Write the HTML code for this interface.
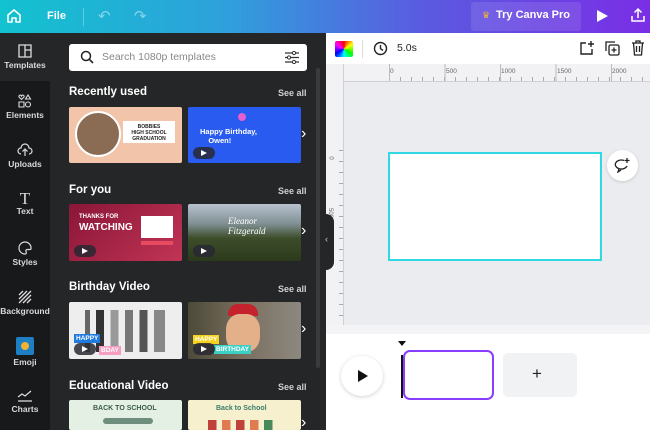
<!DOCTYPE html><html><head><style>
*{margin:0;padding:0;box-sizing:border-box}
body{width:650px;height:430px;overflow:hidden;font-family:"Liberation Sans",sans-serif;background:#fff;position:relative}
.a{position:absolute}
.top{left:0;top:0;width:650px;height:33px;background:linear-gradient(90deg,#12c2cf 0%,#2fa0dc 35%,#5a5be0 65%,#7a2ee6 100%)}
.side{left:0;top:33px;width:50px;height:397px;background:#18191b}
.panel{left:50px;top:33px;width:276px;height:397px;background:#252627}
.si{position:absolute;left:0;width:50px;text-align:center;color:#d9d9da;font-size:8.5px;font-weight:bold}
.h{position:absolute;left:69px;color:#fff;font-size:11.5px;font-weight:bold}
.sa{position:absolute;left:278px;color:#d0d0d0;font-size:9px;font-weight:bold}
.th{position:absolute;width:113px;border-radius:2px;overflow:hidden}
.chev{position:absolute;left:301px;color:#fff;font-size:16px}
.pb{position:absolute;left:5px;bottom:4px;width:22px;height:12px;border-radius:6px;background:rgba(40,40,50,.85)}
.pb:after{content:"";position:absolute;left:8px;top:3px;border-left:6px solid #fff;border-top:3px solid transparent;border-bottom:3px solid transparent}
</style></head><body>
<div class="a top"></div>
<svg class="a" style="left:6px;top:8px" width="16" height="16" viewBox="0 0 16 16"><path d="M2 7 L8 2 L14 7 V14 H10 V10 H6 V14 H2 Z" fill="none" stroke="#fff" stroke-width="1.6" stroke-linejoin="round"/></svg>
<div class="a" style="left:47px;top:10px;color:#fff;font-size:11px;font-weight:bold">File</div>
<div class="a" style="left:83px;top:8px;width:1px;height:18px;background:rgba(255,255,255,.3)"></div>
<div class="a" style="left:98px;top:7px;color:rgba(255,255,255,.45);font-size:15px">↶</div>
<div class="a" style="left:134px;top:7px;color:rgba(255,255,255,.45);font-size:15px">↷</div>
<div class="a" style="left:471px;top:2px;width:110px;height:29px;background:rgba(255,255,255,.1);border-radius:3px"></div>
<div class="a" style="left:482px;top:10px;color:#f5b82e;font-size:9px">♛</div>
<div class="a" style="left:496px;top:9px;color:#fff;font-size:11px;font-weight:bold">Try Canva Pro</div>
<div class="a" style="left:597px;top:10px;border-left:11px solid #fff;border-top:6px solid transparent;border-bottom:6px solid transparent"></div>
<svg class="a" style="left:630px;top:7px" width="16" height="16" viewBox="0 0 16 16"><path d="M8 11V2M4.5 5.5L8 2l3.5 3.5M2 9v5h12V9" fill="none" stroke="#fff" stroke-width="1.5"/></svg>

<div class="a side"></div>
<div class="a" style="left:0;top:33px;width:50px;height:48px;background:#252627"></div>
<div class="a panel"></div>
<div class="si" style="top:44px"><svg width="14" height="14" viewBox="0 0 14 14"><path d="M1 1h12v12H1zM7 1v12M7 6h6" fill="none" stroke="#ddd" stroke-width="1.3"/></svg><br>Templates</div>
<div class="si" style="top:94px"><svg width="14" height="14" viewBox="0 0 14 14"><path d="M3.5 5.5L1 3a1.3 1.3 0 0 1 2.5-1 1.3 1.3 0 0 1 2.5 1zM10 1l2.5 4h-5zM1 8h5v5H1z" fill="none" stroke="#ddd" stroke-width="1.1"/><circle cx="10" cy="10.5" r="2.5" fill="none" stroke="#ddd" stroke-width="1.1"/></svg><br>Elements</div>
<div class="si" style="top:143px"><svg width="16" height="14" viewBox="0 0 16 14"><path d="M4 11a3 3 0 0 1 0-6 4 4 0 0 1 8 0 3 3 0 0 1 0 6M8 13V6M5.5 8.5L8 6l2.5 2.5" fill="none" stroke="#ddd" stroke-width="1.2"/></svg><br>Uploads</div>
<div class="si" style="top:192px"><span style="font-family:'Liberation Serif';font-size:17px;font-weight:normal;line-height:14px">T</span><br>Text</div>
<div class="si" style="top:241px"><svg width="14" height="14" viewBox="0 0 14 14"><path d="M7 1a6 6 0 1 0 0 12c1.5 0 1.5-1.5 1-2.5s0-2 1.5-2H12a1 1 0 0 0 1-1A6 6 0 0 0 7 1z" fill="none" stroke="#ddd" stroke-width="1.2"/></svg><br>Styles</div>
<div class="si" style="top:290px"><svg width="14" height="14" viewBox="0 0 14 14"><path d="M1 5L5 1M1 9L9 1M1 13L13 1M5 13L13 5M9 13l4-4" stroke="#ddd" stroke-width="1.3"/></svg><br>Background</div>
<div class="si" style="top:337px"><div style="width:18px;height:18px;margin:0 auto 2px;background:#1d7fc4;border-radius:2px;position:relative"><div style="position:absolute;left:5px;top:5px;width:8px;height:8px;border-radius:50%;background:#f2b233"></div></div>Emoji</div>
<div class="si" style="top:388px"><svg width="16" height="14" viewBox="0 0 16 14"><path d="M1 9l4-3 3 2 6-5M1 13h14" fill="none" stroke="#ddd" stroke-width="1.2"/></svg><br>Charts</div>

<div class="a" style="left:69px;top:44px;width:238px;height:27px;background:#fff;border-radius:3px"></div>
<svg class="a" style="left:80px;top:50px" width="14" height="14" viewBox="0 0 14 14"><circle cx="6" cy="6" r="4.5" fill="none" stroke="#222" stroke-width="1.5"/><path d="M9.3 9.3L13 13" stroke="#222" stroke-width="1.6"/></svg>
<div class="a" style="left:102px;top:51px;color:#888;font-size:10.5px">Search 1080p templates</div>
<svg class="a" style="left:284px;top:51px" width="16" height="13" viewBox="0 0 16 13"><path d="M1 2h14M1 6.5h14M1 11h14" stroke="#333" stroke-width="1.2"/><circle cx="10" cy="2" r="1.6" fill="#fff" stroke="#333"/><circle cx="5" cy="6.5" r="1.6" fill="#fff" stroke="#333"/><circle cx="10" cy="11" r="1.6" fill="#fff" stroke="#333"/></svg>
<div class="a" style="left:316px;top:68px;width:4px;height:300px;background:#3a3b3d;border-radius:2px"></div>

<div class="h" style="top:86px">Recently used</div><div class="sa" style="top:88px">See all</div>
<div class="th" style="left:69px;top:107px;height:56px;background:#f2c5ab"><div style="position:absolute;left:6px;top:4px;width:46px;height:46px;border-radius:50%;background:#8a6c55;border:2px solid #fff"></div><div style="position:absolute;left:54px;top:14px;width:52px;height:22px;background:#fff;color:#222;font-size:5px;font-weight:bold;text-align:center;padding-top:3px">BOBBIES<br>HIGH SCHOOL<br>GRADUATION</div></div>
<div class="th" style="left:188px;top:107px;height:56px;background:#2a5bf0"><div style="position:absolute;left:12px;top:20px;color:#fff;font-size:7.5px;font-weight:bold">Happy Birthday,<br>&nbsp;&nbsp;&nbsp;&nbsp;Owen!</div><div style="position:absolute;left:50px;top:6px;width:8px;height:8px;border-radius:50%;background:#e65fd0"></div><div class="pb"></div></div>
<div class="chev" style="top:125px">›</div>

<div class="h" style="top:184px">For you</div><div class="sa" style="top:186px">See all</div>
<div class="th" style="left:69px;top:204px;height:57px;background:linear-gradient(135deg,#8a1638,#c13455)"><div style="position:absolute;left:10px;top:10px;color:#fff;font-size:6px;font-weight:bold">THANKS FOR</div><div style="position:absolute;left:10px;top:18px;color:#fff;font-size:10px;font-weight:bold">WATCHING</div><div style="position:absolute;left:72px;top:12px;width:32px;height:22px;background:#fff"></div><div style="position:absolute;left:72px;top:37px;width:32px;height:4px;background:#e84a5f"></div><div class="pb"></div></div>
<div class="th" style="left:188px;top:204px;height:57px;background:linear-gradient(180deg,#b8c2cf 0%,#7f8f92 35%,#3d4d2a 60%,#2c3a1c 100%)"><div style="position:absolute;left:40px;top:12px;color:#fff;font-size:9px;font-style:italic;font-family:'Liberation Serif'">Eleanor<br>Fitzgerald</div><div class="pb"></div></div>
<div class="chev" style="top:222px">›</div>

<div class="h" style="top:281px">Birthday Video</div><div class="sa" style="top:284px">See all</div>
<div class="th" style="left:69px;top:302px;height:57px;background:#eeeeee"><div style="position:absolute;left:16px;top:8px;width:80px;height:42px;background:linear-gradient(90deg,#666 0 6%,transparent 6% 14%,#333 14% 24%,transparent 24% 32%,#999 32% 42%,transparent 42% 50%,#777 50% 60%,transparent 60% 68%,#555 68% 78%,transparent 78% 86%,#888 86%)"></div><div style="position:absolute;left:5px;top:32px;background:#1f7be0;color:#fff;font-size:6.5px;font-weight:bold;padding:1px 2px">HAPPY</div><div style="position:absolute;left:30px;top:44px;background:#f59ec0;color:#fff;font-size:6.5px;font-weight:bold;padding:1px 2px">BDAY</div><div class="pb"></div></div>
<div class="th" style="left:188px;top:302px;height:57px;background:linear-gradient(90deg,#4c4a38,#7b7060 50%,#8c887f)"><div style="position:absolute;left:40px;top:2px;width:30px;height:12px;background:#c4232e;border-radius:10px 10px 0 0"></div><div style="position:absolute;left:38px;top:12px;width:34px;height:38px;background:#e4b08a;border-radius:40%"></div><div style="position:absolute;left:5px;top:33px;background:#f5d21e;color:#fff;font-size:6.5px;font-weight:bold;padding:1px 2px">HAPPY</div><div style="position:absolute;left:26px;top:43px;background:#3ccfc4;color:#fff;font-size:6.5px;font-weight:bold;padding:1px 2px">BIRTHDAY</div><div class="pb"></div></div>
<div class="chev" style="top:320px">›</div>

<div class="h" style="top:380px">Educational Video</div><div class="sa" style="top:382px">See all</div>
<div class="th" style="left:69px;top:400px;height:30px;background:#e4f0e4"><div style="position:absolute;left:24px;top:5px;color:#3b5b4a;font-size:7px;font-weight:bold">BACK TO SCHOOL</div><div style="position:absolute;left:34px;top:18px;width:50px;height:6px;background:#6f8e7e;border-radius:3px"></div></div>
<div class="th" style="left:188px;top:400px;height:30px;background:#f6f0cf"><div style="position:absolute;left:28px;top:5px;color:#3a7d6a;font-size:7px;font-weight:bold">Back to School</div><div style="position:absolute;left:20px;top:20px;width:70px;height:10px;background:linear-gradient(90deg,#c0403a 0 12%,transparent 12% 20%,#e07b50 20% 32%,transparent 32% 40%,#c0403a 40% 52%,transparent 52% 60%,#e07b50 60% 72%,transparent 72% 80%,#4a8a5a 80% 92%,transparent 92%)"></div></div>
<div class="chev" style="top:414px">›</div>

<div class="a" style="left:326px;top:33px;width:324px;height:397px;background:#fff"></div>
<div class="a" style="left:335px;top:41px;width:18px;height:16px;background:conic-gradient(red,yellow,lime,cyan,blue,magenta,red);border-radius:2px"></div>
<div class="a" style="left:362px;top:40px;width:1px;height:18px;background:#ddd"></div>
<svg class="a" style="left:373px;top:41px" width="15" height="15" viewBox="0 0 15 15"><circle cx="7.5" cy="7.5" r="6" fill="none" stroke="#222" stroke-width="1.4"/><path d="M7.5 4v3.7L10 9.5" fill="none" stroke="#222" stroke-width="1.4"/></svg>
<div class="a" style="left:397px;top:42px;font-size:10.5px;color:#222">5.0s</div>
<svg class="a" style="left:579px;top:40px" width="16" height="16" viewBox="0 0 16 16"><path d="M7 3H2v11h11V9M12 1v6M9 4h6" fill="none" stroke="#222" stroke-width="1.4"/></svg>
<svg class="a" style="left:605px;top:41px" width="15" height="15" viewBox="0 0 15 15"><path d="M1 10V1h9" fill="none" stroke="#222" stroke-width="1.3"/><rect x="4" y="4" width="10" height="10" rx="1.5" fill="none" stroke="#222" stroke-width="1.3"/><path d="M9 6.5v5M6.5 9h5" stroke="#222" stroke-width="1.3"/></svg>
<svg class="a" style="left:631px;top:40px" width="14" height="16" viewBox="0 0 14 16"><path d="M1 3h12M5 3V1h4v2M2.5 3l1 12h7l1-12M5.5 6v6M8.5 6v6" fill="none" stroke="#222" stroke-width="1.3"/></svg>

<div class="a" style="left:326px;top:64px;width:324px;height:270px;background:#ebecf0"></div>
<div class="a" style="left:326px;top:64px;width:324px;height:18px;background:#f2f2f4;border-bottom:1px solid #d0d0d4"></div>
<div class="a" style="left:326px;top:64px;width:18px;height:270px;background:#f2f2f4;border-right:1px solid #d0d0d4"></div>
<div class="a" style="left:390px;top:68px;font-size:6.5px;color:#666">0</div>
<div class="a" style="left:446px;top:68px;font-size:6.5px;color:#666">500</div>
<div class="a" style="left:501px;top:68px;font-size:6.5px;color:#666">1000</div>
<div class="a" style="left:557px;top:68px;font-size:6.5px;color:#666">1500</div>
<div class="a" style="left:612px;top:68px;font-size:6.5px;color:#666">2000</div>
<div class="a" style="left:389px;top:77px;width:255px;height:4px;background:repeating-linear-gradient(90deg,#aaa 0 1px,transparent 1px 11px)"></div>
<div class="a" style="left:389px;top:64px;width:255px;height:17px;background:repeating-linear-gradient(90deg,#bbb 0 1px,transparent 1px 55.5px)"></div>
<div class="a" style="left:329px;top:155px;font-size:6px;color:#666;transform:rotate(90deg)">0</div>
<div class="a" style="left:325px;top:210px;font-size:6px;color:#666;transform:rotate(90deg)">500</div>
<div class="a" style="left:339px;top:150px;width:4px;height:180px;background:repeating-linear-gradient(180deg,#aaa 0 1px,transparent 1px 11px)"></div>
<div class="a" style="left:326px;top:325px;width:324px;height:9px;background:#f4f4f6"></div>
<div class="a" style="left:388px;top:152px;width:214px;height:109px;background:#fff;border:2px solid #2fd8e3"></div>
<div class="a" style="left:607px;top:150px;width:31px;height:31px;border-radius:50%;background:#fff;box-shadow:0 1px 3px rgba(0,0,0,.15)"></div>
<svg class="a" style="left:614px;top:157px" width="18" height="16" viewBox="0 0 18 16"><path d="M10 3.5A6 4.5 0 1 0 13 9M5 12l-1 3 3-2" fill="none" stroke="#222" stroke-width="1.3"/><path d="M13 1v5M10.5 3.5h5" stroke="#222" stroke-width="1.3"/></svg>

<div class="a" style="left:322px;top:214px;width:12px;height:56px;background:#252627;border-radius:0 8px 8px 0"></div>
<div class="a" style="left:325px;top:234px;color:#ccc;font-size:9px">‹</div>

<div class="a" style="left:341px;top:356px;width:42px;height:40px;border-radius:50%;background:#fff;box-shadow:0 1px 4px rgba(0,0,0,.18)"></div>
<div class="a" style="left:358px;top:370px;border-left:10px solid #111;border-top:6px solid transparent;border-bottom:6px solid transparent"></div>
<div class="a" style="left:398px;top:341px;border-top:5px solid #111;border-left:4px solid transparent;border-right:4px solid transparent"></div>
<div class="a" style="left:401px;top:355px;width:2px;height:43px;background:#111"></div>
<div class="a" style="left:403px;top:350px;width:91px;height:50px;border:2px solid #8b3dff;border-radius:7px;background:#fff"></div>
<div class="a" style="left:503px;top:353px;width:74px;height:44px;background:#f1f2f4;border-radius:5px"></div>
<div class="a" style="left:532px;top:364px;font-size:17px;color:#222">+</div>
</body></html>
